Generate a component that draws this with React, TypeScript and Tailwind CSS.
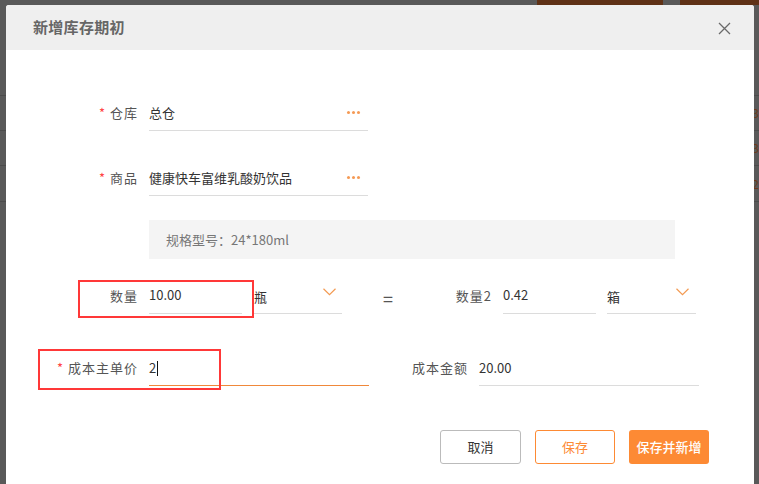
import React from "react";

const font = { fontFamily: '"Noto Sans CJK SC", "Noto Sans", sans-serif' };

function Chevron() {
  return (
    <svg width="13" height="8" viewBox="0 0 13 8" className="mb-[8px]">
      <path d="M0.5 0.8 L6.5 6.6 L12.5 0.8" fill="none" stroke="#f39a52" strokeWidth="1.2" />
    </svg>
  );
}

function Dots() {
  return (
    <div className="flex gap-[2px] items-center">
      <span className="w-[3px] h-[3px] rounded-full bg-[#f59a55]" />
      <span className="w-[3px] h-[3px] rounded-full bg-[#f59a55]" />
      <span className="w-[3px] h-[3px] rounded-full bg-[#f59a55]" />
    </div>
  );
}

function Label({ text, req, w }: { text: string; req?: boolean; w: string }) {
  return (
    <div className={`${w} h-[35px] flex items-center justify-end pb-[1px] text-[13px] text-[#555] shrink-0`}>
      {req && <span className="text-[#f44] mr-[5px] text-[13px]">*</span>}
      <span className="tracking-[1px] -mr-[1px]">{text}</span>
    </div>
  );
}

export default function App() {
  return (
    <div className="w-[759px] h-[484px] relative overflow-hidden bg-[#595959]" style={font}>
      {/* background page under the mask */}
      <div className="flex flex-col">
        <div className="h-[5px] flex">
          <div className="w-[537px]" />
          <div className="w-[126px] bg-[#5f3116]" />
          <div className="w-[17px]" />
          <div className="flex-1 bg-[#5f3116]" />
        </div>
        <div className="h-[91px] border-b border-[#4b4b4b]" />
        <div className="h-[35px] border-b border-[#4b4b4b] flex justify-end items-center text-[12px] text-[#6b3a1c]">3</div>
        <div className="h-[35px] border-b border-[#4b4b4b] flex justify-end items-center text-[12px] text-[#6b3a1c]">3</div>
        <div className="h-[36px] border-b border-[#4b4b4b] flex justify-end items-center text-[12px] text-[#6b3a1c]">2</div>
      </div>

      {/* modal */}
      <div className="absolute left-[6px] top-[5px] w-[748px] h-[490px] bg-white rounded-[3px] overflow-hidden">
        <div className="h-[45px] bg-[#efefef] flex items-center justify-between pl-[27px] pr-[23px]">
          <span className="text-[15px] font-bold text-[#666] tracking-[0.3px]">新增库存期初</span>
          <svg width="13" height="13" viewBox="0 0 13 13" className="mt-[2px]">
            <path d="M1 1 L12 12 M12 1 L1 12" stroke="#6a6a6a" strokeWidth="1.3" />
          </svg>
        </div>

        <div className="relative flex flex-col pt-[46px]">
          {/* row 1 */}
          <div className="flex">
            <Label text="仓库" req w="w-[131px]" />
            <div className="ml-[12px] w-[219px] h-[35px] border-b border-[#dcdcdc] flex items-center justify-between pr-[8px] pb-[1px] text-[13px] text-[#333]">
              <span>总仓</span>
              <Dots />
            </div>
          </div>
          {/* row 2 */}
          <div className="flex mt-[30px]">
            <Label text="商品" req w="w-[131px]" />
            <div className="ml-[12px] w-[219px] h-[35px] border-b border-[#dcdcdc] flex items-center justify-between pr-[8px] pb-[1px] text-[13px] text-[#333]">
              <span>健康快车富维乳酸奶饮品</span>
              <Dots />
            </div>
          </div>
          {/* spec */}
          <div className="ml-[143px] mt-[24px] w-[526px] h-[39px] bg-[#f4f4f4] flex items-center pl-[17px] text-[13px] text-[#777]">
            规格型号：24*180ml
          </div>
          {/* row 3 */}
          <div className="flex mt-[20px]">
            <Label text="数量" w="w-[131px]" />
            <div className="ml-[12px] w-[93px] h-[35px] border-b border-[#dcdcdc] flex items-center pb-[2px] text-[13px] text-[#333]">10.00</div>
            <div className="ml-[12px] w-[88px] h-[35px] border-b border-[#dcdcdc] flex items-center justify-between pr-[6px] text-[13px] text-[#333]">
              <span className="pt-[2px]">瓶</span>
              <Chevron />
            </div>
            <div className="ml-[41px] h-[35px] flex items-center pt-[4px] text-[18px] text-[#555]">=</div>
            <Label text="数量2" w="w-[98px]" />
            <div className="ml-[12px] w-[93px] h-[35px] border-b border-[#dcdcdc] flex items-center pb-[2px] text-[13px] text-[#333]">0.42</div>
            <div className="ml-[11px] w-[89px] h-[35px] border-b border-[#dcdcdc] flex items-center justify-between pr-[7px] text-[13px] text-[#333]">
              <span className="pt-[2px]">箱</span>
              <Chevron />
            </div>
          </div>
          {/* row 4 */}
          <div className="flex mt-[37px]">
            <Label text="成本主单价" req w="w-[131px]" />
            <div className="ml-[12px] w-[220px] h-[35px] border-b border-[#f0883a] flex items-center text-[13px] text-[#333]">
              <span>2</span>
              <span className="w-[1px] h-[15px] bg-[#111] ml-[1px]" />
            </div>
            <Label text="成本金额" w="w-[98px]" />
            <div className="ml-[12px] w-[220px] h-[35px] border-b border-[#dcdcdc] flex items-center text-[13px] text-[#333]">20.00</div>
          </div>
          {/* buttons */}
          <div className="flex justify-end gap-[14px] mt-[44px] pr-[45px]">
            <button className="w-[81px] h-[34px] border border-[#bbb] rounded-[3px] bg-white text-[13px] text-[#333]">取消</button>
            <button className="w-[80px] h-[34px] border border-[#fd8a34] rounded-[3px] bg-white text-[13px] text-[#fd8a34]">保存</button>
            <button className="w-[80px] h-[34px] rounded-[3px] bg-[#fd8a34] text-[13px] font-medium text-white">保存并新增</button>
          </div>

          {/* red annotation boxes */}
          <div className="absolute left-[72px] top-[230px] w-[176px] h-[38px] border-[2.5px] border-[#ff3838] pointer-events-none" />
          <div className="absolute left-[32px] top-[299px] w-[183px] h-[41px] border-[2.5px] border-[#ff3838] pointer-events-none" />
        </div>
      </div>
    </div>
  );
}
